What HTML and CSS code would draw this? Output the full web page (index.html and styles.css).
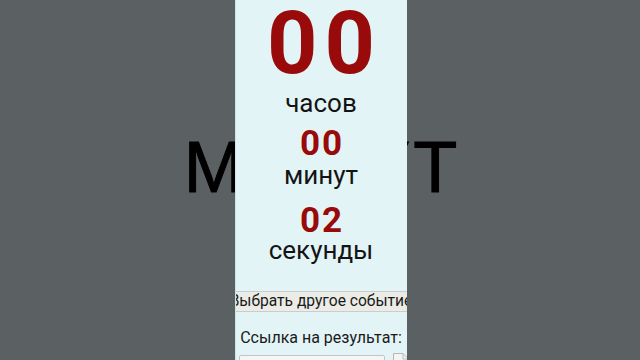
FILE: index.html
```html
<!DOCTYPE html>
<html lang="ru">
<head>
<meta charset="utf-8">
<link rel="stylesheet" href="styles.css">
</head>
<body>
<div class="stage">
  <div class="bgword">МИНУТ</div>
  <div class="panel">
    <div class="num big">00</div>
    <div class="label l-hours">часов</div>
    <div class="num small n-min">00</div>
    <div class="label l-min">минут</div>
    <div class="num small n-sec">02</div>
    <div class="label l-sec">секунды</div>
    <div class="btn"><span>Выбрать другое событие</span></div>
    <div class="link">Ссылка на результат:</div>
    <div class="linkrow">
      <div class="field"></div>
      <svg class="copy" width="18" height="10" viewBox="0 0 18 10">
        <path d="M1.5 10 V0.5 H11 L16.5 6 V10" fill="#f4f4f4" stroke="#b8b8b8" stroke-width="1"/>
        <path d="M11 0.5 V6 H16.5" fill="none" stroke="#b8b8b8" stroke-width="1"/>
      </svg>
    </div>
  </div>
</div>
</body>
</html>
```
FILE: styles.css
```css
html, body {
  margin: 0;
  padding: 0;
}
body {
  width: 640px;
  height: 360px;
  overflow: hidden;
  background: #5b6163;
  font-family: Roboto, "Liberation Sans", sans-serif;
}
.stage {
  position: relative;
  width: 640px;
  height: 360px;
  display: flex;
  justify-content: center;
}
.bgword {
  position: absolute;
  left: 0;
  right: 0;
  top: 131px;
  text-align: center;
  font-family: "Liberation Sans", Arial, sans-serif;
  font-size: 72px;
  line-height: 1;
  letter-spacing: 5px;
  padding-left: 6px;
  color: #000;
  -webkit-text-stroke: 1px #000;
  filter: blur(0.6px);
}
.panel {
  position: relative;
  width: 171px;
  height: 360px;
  margin-left: 1px;
  background: #e3f4f7;
  border-left: 1px solid #cfe3e6;
  overflow: hidden;
  display: flex;
  flex-direction: column;
  align-items: center;
}
.num {
  color: #990a0a;
  font-weight: 700;
  line-height: 1;
}
.big {
  font-size: 88px;
  margin-top: -1px;
  letter-spacing: 7px;
  padding-left: 7px;
}
.small {
  font-size: 35px;
  letter-spacing: 2px;
  padding-left: 2px;
}
.label {
  color: #141414;
  font-size: 26px;
  line-height: 1;
}
.l-hours { margin-top: 3px; }
.n-min { margin-top: 10px; }
.l-min { margin-top: 1px; }
.n-sec { margin-top: 15px; }
.l-sec { margin-top: -1px; }
.btn {
  margin-top: 28px;
  width: 100%;
  height: 19px;
  flex: none;
  background: #ebece6;
  border-top: 1px solid #c9cdcd;
  border-bottom: 1px solid #c9cdcd;
  display: flex;
  justify-content: center;
  align-items: center;
}
.btn span {
  white-space: nowrap;
  font-size: 15.6px;
  line-height: 1;
  color: #1a1a1a;
  flex: none;
}
.link {
  margin-top: 18px;
  font-size: 16px;
  line-height: 1;
  color: #1a1a1a;
  white-space: nowrap;
}
.linkrow {
  margin-top: 9px;
  width: 100%;
  display: flex;
  align-items: flex-start;
  gap: 7px;
  padding-left: 3px;
  box-sizing: border-box;
}
.field {
  flex: none;
  width: 144px;
  height: 20px;
  background: #f6f6f6;
  border: 1px solid #c4c4c4;
  border-radius: 2px;
}
.copy {
  flex: none;
  margin-top: -2px;
}
```
